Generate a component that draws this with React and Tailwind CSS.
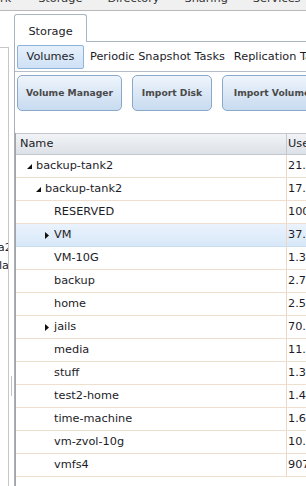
const rows = [
  { name: "backup-tank2", used: "21.4 TiB", level: 0, toggle: "open" },
  { name: "backup-tank2", used: "17.9 TiB", level: 1, toggle: "open" },
  { name: "RESERVED", used: "100.0 GiB", level: 2 },
  { name: "VM", used: "37.2 GiB", level: 2, toggle: "closed", selected: true },
  { name: "VM-10G", used: "1.3 TiB", level: 2 },
  { name: "backup", used: "2.7 TiB", level: 2 },
  { name: "home", used: "2.5 TiB", level: 2 },
  { name: "jails", used: "70.1 GiB", level: 2, toggle: "closed" },
  { name: "media", used: "11.2 TiB", level: 2 },
  { name: "stuff", used: "1.3 TiB", level: 2 },
  { name: "test2-home", used: "1.4 TiB", level: 2 },
  { name: "time-machine", used: "1.6 TiB", level: 2 },
  { name: "vm-zvol-10g", used: "10.3 GiB", level: 2 },
  { name: "vmfs4", used: "907.5 GiB", level: 2 },
]

const indent = ["pl-[4px]", "pl-[13px]", "pl-[22px]"]

const Toggle = ({ kind }) => {
  if (kind === "open") {
    return (
      <svg width="5" height="5" viewBox="0 0 5 5" className="mr-[4px]">
        <polygon points="5,0 5,5 0,5" fill="#111" />
      </svg>
    )
  }
  if (kind === "closed") {
    return (
      <svg width="4" height="7" viewBox="0 0 4 7" className="mr-[5px]">
        <polygon points="0,0 4,3.5 0,7" fill="#111" />
      </svg>
    )
  }
  return null
}

const ActionButton = ({ children, width }) => (
  <button
    className={`${width} h-[36px] shrink-0 rounded-[5px] border border-[#8aa9c9] bg-gradient-to-b from-[#eef4fb] to-[#c8dbf0] text-[9.2px] font-bold text-[#4a4a4a] whitespace-nowrap`}
  >
    {children}
  </button>
)

export default function App() {
  return (
    <div className="w-[306px] h-[486px] overflow-hidden bg-white flex flex-col font-['DejaVu_Sans',sans-serif] text-[11.3px] text-[#1c1c28]">
      {/* top menu, scrolled up */}
      <div className="h-[11px] shrink-0 bg-[#f0f0f0] border-b border-[#b9b9b9] overflow-hidden">
        <div className="flex gap-[25px] mt-[-7px] leading-[12px] text-[#333] whitespace-nowrap">
          <span className="mr-[2px]">rk</span>
          <span>Storage</span>
          <span>Directory</span>
          <span>Sharing</span>
          <span>Services</span>
        </div>
      </div>

      <div className="flex flex-1 min-h-0">
        {/* left tree panel, mostly hidden */}
        <div className="w-[9px] shrink-0 flex flex-col">
          <div className="mt-[36px] flex-1 border-t border-r border-[#c6c6c6] overflow-hidden flex flex-col items-end">
            <span className="mt-[191px] mr-[-4px] leading-[18px] whitespace-nowrap">ada2</span>
            <span className="mr-[-1px] leading-[18px] whitespace-nowrap">Sola</span>
          </div>
        </div>

        {/* splitter */}
        <div className="w-[5px] shrink-0 flex flex-col items-center">
          <div className="mt-[365px] h-[20px] w-px bg-[#c4c4c4] ml-[-1px]" />
        </div>

        {/* main area */}
        <div className="flex-1 min-w-0 flex flex-col">
          <div className="h-[31px] shrink-0 flex items-end">
            <div className="w-[73px] h-[28px] shrink-0 border border-b-0 border-[#a9b4c4] rounded-t-[3px] bg-white flex items-center justify-center pt-[7px]">
              Storage
            </div>
            <div className="flex-1 border-b border-[#a9b4c4]" />
          </div>

          <div className="flex-1 min-h-0 flex flex-col border-l border-[#a9b0ba]">
            <div className="shrink-0 border-b border-[#b4bcc8] pt-[3px] pb-[2px] pl-[2px] flex items-center whitespace-nowrap">
              <div className="h-[24px] w-[67px] shrink-0 rounded-[2px] border border-[#8db2db] bg-gradient-to-b from-[#e6f0fb] to-[#cfe1f6] flex items-center justify-center">
                Volumes
              </div>
              <span className="ml-[6px]">Periodic Snapshot Tasks</span>
              <span className="ml-[9px]">Replication Tasks</span>
            </div>

            <div className="shrink-0 pt-[3px] pl-[2px] flex gap-[10px]">
              <ActionButton width="w-[105px]">Volume Manager</ActionButton>
              <ActionButton width="w-[80px]">Import Disk</ActionButton>
              <ActionButton width="w-[100px]">Import Volume</ActionButton>
            </div>

            <div className="mt-[22px] flex-1 min-h-0 border-l border-[#a4a4a4] flex flex-col">
              <div className="h-[22px] shrink-0 flex border-t border-b border-[#c2c7ce] bg-gradient-to-b from-[#f1f3f6] to-[#dde2e8]">
                <div className="w-[271px] shrink-0 border-r border-[#c4c8ce] pl-[4px] flex items-center">Name</div>
                <div className="pl-[1px] flex items-center whitespace-nowrap">Used</div>
              </div>
              {rows.map((row, index) => (
                <div
                  key={index}
                  className={`h-[23px] shrink-0 flex border-b ${
                    row.selected
                      ? "bg-gradient-to-b from-[#eaf3fd] to-[#d8e8f8] border-[#c9def3]"
                      : "border-[#f0dfcf]"
                  }`}
                >
                  <div className={`w-[271px] shrink-0 border-r border-[#ecd8c4] flex items-center ${indent[row.level]}`}>
                    <div className="w-[16px] shrink-0 flex justify-end items-center">
                      <Toggle kind={row.toggle} />
                    </div>
                    <span className="whitespace-nowrap">{row.name}</span>
                  </div>
                  <div className="pl-[1px] flex items-center whitespace-nowrap">{row.used}</div>
                </div>
              ))}
            </div>
          </div>
        </div>
      </div>
    </div>
  )
}
